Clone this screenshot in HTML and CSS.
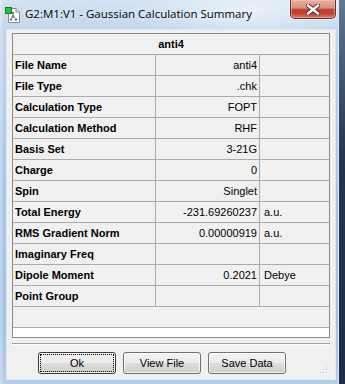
FILE: index.html
```html
<!DOCTYPE html>
<html>
<head>
<meta charset="utf-8">
<link rel="stylesheet" href="styles.css">
</head>
<body>
<div class="window">
  <div class="titlebar">
    <svg class="appicon" width="16" height="17" viewBox="0 0 16 17">
      <path d="M3.5 1.5 H11 L14.5 5 V15.5 H3.5 Z" fill="#fff" stroke="#8a8a8a"/>
      <path d="M11 1.5 V5 H14.5" fill="#e8e8e8" stroke="#8a8a8a"/>
      <rect x="0.5" y="0.5" width="6" height="6" fill="#27c43a" stroke="#137a20"/>
      <g stroke="#8f8f8f" stroke-width="1">
        <line x1="8" y1="6" x2="8" y2="9"/>
        <line x1="8" y1="9" x2="6" y2="12"/>
        <line x1="8" y1="9" x2="11" y2="12"/>
      </g>
      <g fill="#7a7a7a">
        <circle cx="8" cy="6" r="1.2"/>
        <circle cx="8" cy="9.5" r="1.4"/>
        <circle cx="6" cy="12.5" r="1.2"/>
        <circle cx="11" cy="12.5" r="1.2"/>
      </g>
    </svg>
    <div class="title">G2:M1:V1 - Gaussian Calculation Summary</div>
    <div class="close">
      <svg width="14" height="11" viewBox="0 0 14 11">
        <path d="M2 1.5 L12 9.5 M12 1.5 L2 9.5" stroke="#5a2620" stroke-width="4.4" stroke-linecap="round"/>
        <path d="M2 1.5 L12 9.5 M12 1.5 L2 9.5" stroke="#ffffff" stroke-width="2.6" stroke-linecap="round"/>
      </svg>
    </div>
  </div>
  <div class="client">
    <div class="grid">
      <div class="row head">anti4</div>
      <div class="row"><div class="c1">File Name</div><div class="c2">anti4</div><div class="c3"></div></div>
      <div class="row"><div class="c1">File Type</div><div class="c2">.chk</div><div class="c3"></div></div>
      <div class="row"><div class="c1">Calculation Type</div><div class="c2">FOPT</div><div class="c3"></div></div>
      <div class="row"><div class="c1">Calculation Method</div><div class="c2">RHF</div><div class="c3"></div></div>
      <div class="row"><div class="c1">Basis Set</div><div class="c2">3-21G</div><div class="c3"></div></div>
      <div class="row"><div class="c1">Charge</div><div class="c2">0</div><div class="c3"></div></div>
      <div class="row"><div class="c1">Spin</div><div class="c2">Singlet</div><div class="c3"></div></div>
      <div class="row"><div class="c1">Total Energy</div><div class="c2">-231.69260237</div><div class="c3">a.u.</div></div>
      <div class="row"><div class="c1">RMS Gradient Norm</div><div class="c2">0.00000919</div><div class="c3">a.u.</div></div>
      <div class="row"><div class="c1">Imaginary Freq</div><div class="c2"></div><div class="c3"></div></div>
      <div class="row"><div class="c1">Dipole Moment</div><div class="c2">0.2021</div><div class="c3">Debye</div></div>
      <div class="row"><div class="c1">Point Group</div><div class="c2"></div><div class="c3"></div></div>
      <div class="row"></div>
    </div>
    <div class="sep"></div>
    <div class="buttons">
      <div class="btn default"><span class="focus">Ok</span></div>
      <div class="btn">View File</div>
      <div class="btn">Save Data</div>
    </div>
    <svg class="grip" width="10" height="10" viewBox="0 0 10 10">
      <g fill="#b8b8b8">
        <rect x="7" y="1" width="1" height="1"/>
        <rect x="4" y="4" width="1" height="1"/><rect x="7" y="4" width="1" height="1"/>
        <rect x="1" y="7" width="1" height="1"/><rect x="4" y="7" width="1" height="1"/><rect x="7" y="7" width="1" height="1"/>
      </g>
      <g fill="#fff">
        <rect x="8" y="2" width="1" height="1"/>
        <rect x="5" y="5" width="1" height="1"/><rect x="8" y="5" width="1" height="1"/>
        <rect x="2" y="8" width="1" height="1"/><rect x="5" y="8" width="1" height="1"/><rect x="8" y="8" width="1" height="1"/>
      </g>
    </svg>
  </div>
</div>
</body>
</html>
```
FILE: styles.css
```css
* { box-sizing: border-box; }
html, body { margin: 0; padding: 0; }
body {
  width: 345px;
  height: 384px;
  overflow: hidden;
  background: linear-gradient(180deg, #5e7896 0%, #24364f 40%, #1d2c44 100%);
  font-family: "Liberation Sans", Arial, sans-serif;
  font-size: 11px;
  color: #000;
}
.window {
  width: 339px;
  height: 384px;
  display: flex;
  flex-direction: column;
  padding: 0 2px 4px 6px;
  border-right: 1px solid #e4edf7;
  background:
    radial-gradient(ellipse 120px 40px at 250px 10px, rgba(255,255,255,0.55), rgba(255,255,255,0) 100%),
    linear-gradient(90deg, rgba(255,255,255,0.35) 0, rgba(255,255,255,0) 4px),
    linear-gradient(180deg, #d3e2f3 0%, #c1d6ed 8%, #a9c5e6 50%, #a4c2e4 85%, #b4cde9 100%);
}
.titlebar {
  height: 29px;
  display: flex;
  align-items: flex-start;
}
.appicon {
  margin: 7px 0 0 -1px;
  flex: none;
}
.title {
  margin: 6px 0 0 4px;
  font-family: "Open Sans", "Noto Sans", sans-serif;
  font-size: 11.5px;
  line-height: 16px;
  color: #000;
  white-space: nowrap;
  text-shadow: 0 0 6px rgba(255,255,255,0.9);
  flex: none;
}
.close {
  margin-left: auto;
  width: 46px;
  height: 19px;
  flex: none;
  border: 1px solid #6a2c24;
  border-top: none;
  border-radius: 0 0 5px 5px;
  background: linear-gradient(180deg, #e6b0a3 0%, #d9907e 45%, #c3432f 52%, #c03f2c 72%, #d9775e 100%);
  box-shadow: 0 0 0 1px rgba(255,255,255,0.55), inset 0 0 0 1px rgba(255,210,200,0.45);
  display: flex;
  align-items: center;
  justify-content: center;
}
.client {
  position: relative;
  height: 351px;
  background: #f0f0f0;
  border: 1px solid #dfe7f1;
  padding: 3px 5px 0 5px;
}
.grid {
  height: 305px;
  border: 1px solid #8c8c8c;
  background: #fff;
}
.row {
  display: flex;
  height: 21px;
  line-height: 20px;
  border-bottom: 1px solid #aaaaaa;
  background: #f0f0f0;
  white-space: nowrap;
}
.head {
  justify-content: center;
  font-weight: bold;
}
.c1 {
  width: 143px;
  border-right: 1px solid #aaaaaa;
  padding-left: 2px;
  font-weight: bold;
}
.c2 {
  width: 104px;
  border-right: 1px solid #aaaaaa;
  text-align: right;
  padding-right: 2px;
}
.c3 {
  flex: 1;
  padding-left: 4px;
}
.sep {
  margin-top: 5px;
  height: 2px;
  border-top: 1px solid #a0a0a0;
  border-bottom: 1px solid #ffffff;
}
.buttons {
  display: flex;
  gap: 7px;
  margin-top: 7px;
  padding-left: 26px;
}
.btn {
  width: 78px;
  height: 22px;
  border: 1px solid #707070;
  border-radius: 3px;
  background: linear-gradient(180deg, #f3f3f3 0%, #ebebeb 48%, #dddddd 52%, #cfcfcf 100%);
  box-shadow: inset 0 0 0 1px rgba(255,255,255,0.7);
  display: flex;
  align-items: center;
  justify-content: center;
  font-size: 11px;
  line-height: 14px;
}
.btn.default {
  border-color: #3a3a3a;
  padding: 1px;
}
.focus {
  flex: 1;
  align-self: stretch;
  display: flex;
  align-items: center;
  justify-content: center;
  border: 1px dotted #000;
  border-radius: 1px;
}
.grip {
  position: absolute;
  right: 6px;
  bottom: 4px;
}
```
